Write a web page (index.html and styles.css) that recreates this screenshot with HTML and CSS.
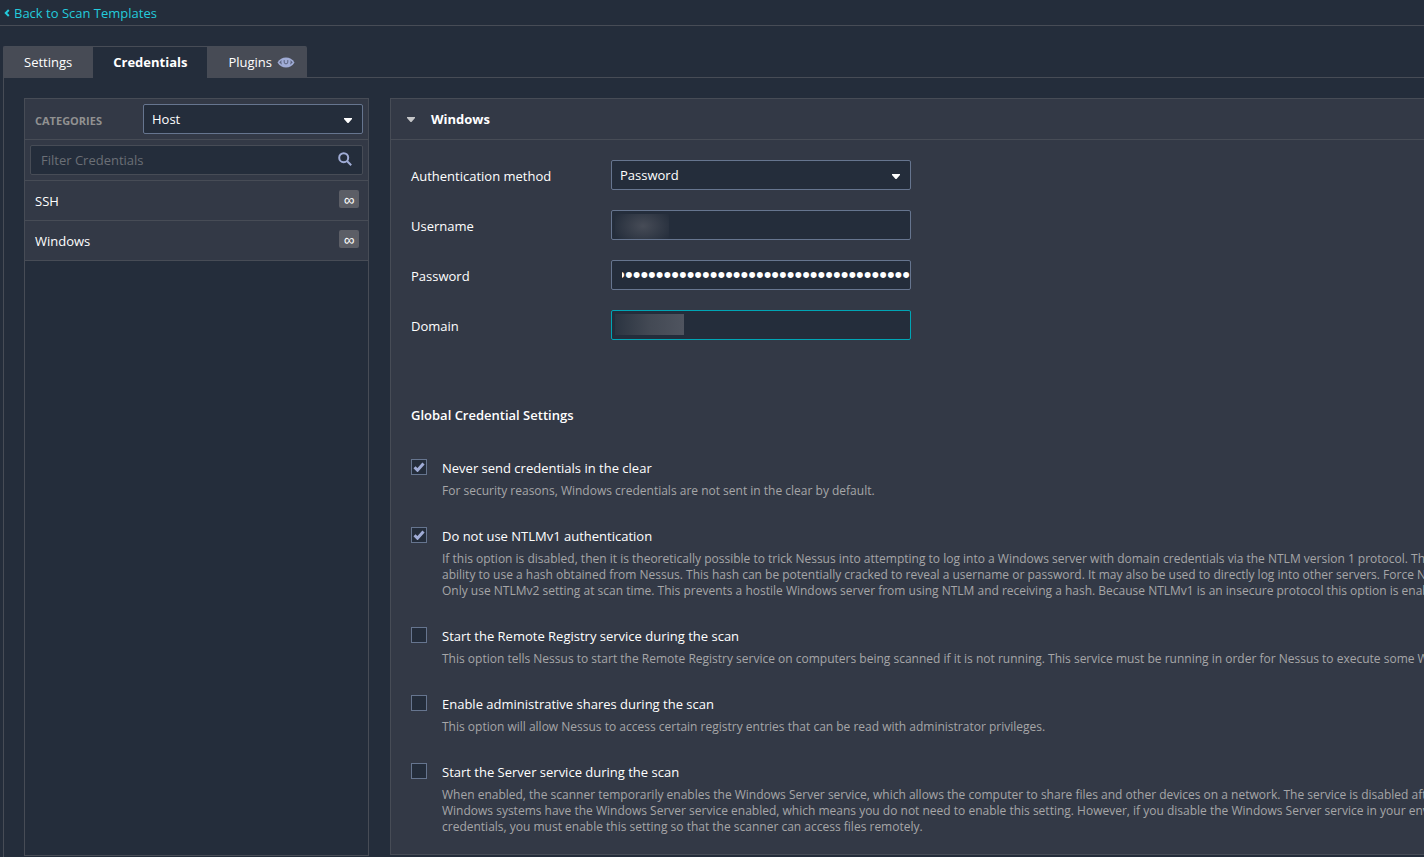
FILE: index.html
```html
<!DOCTYPE html>
<html lang="en">
<head>
  <meta charset="UTF-8">
  <title>Scan Templates - Credentials</title>
  <link rel="stylesheet" href="styles.css">
</head>
<body>
  <nav class="topbar">
    <a href="#">
      <svg width="6" height="8" viewBox="0 0 6 8"><path d="M4.800 1 1.800 4l3 3" fill="none" stroke="currentColor" stroke-width="2"/></svg>
      Back to Scan Templates
    </a>
  </nav>

  <div class="tabs">
    <button class="tab">Settings</button>
    <button class="tab active">Credentials</button>
    <button class="tab">Plugins
      <svg width="18" height="12" viewBox="0 0 18 12">
        <path d="M.5 6.500C2.500 3.200 5.500 1.500 9 1.500s6.500 1.700 8.500 5c-2 3.300-5 5-8.500 5s-6.500-1.700-8.500-5Z" fill="#a0acd6"/>
        <path d="M4.600 4.100 2.300 6.500l2.700 2.200C4.200 7 4.200 5.500 4.600 4.100ZM13.400 4.100l2.300 2.400L13 8.700c.8-1.700.8-3.200.4-4.600Z" fill="#59617c"/>
        <path d="M7.200 4.100v2a1.800 1.800 0 0 0 3.600 0v-2" fill="none" stroke="#59617c" stroke-width="1"/>
      </svg>
    </button>
  </div>

  <main class="content">
    <aside class="sidebar">
      <div class="side-head">
        <label for="category">CATEGORIES</label>
        <div class="select">
          <select id="category"><option>Host</option></select>
          <svg width="8" height="5" viewBox="0 0 8 5"><path d="M0 0h8v1L4.500 5h-1L0 1Z"/></svg>
        </div>
      </div>
      <div class="side-search">
        <input type="text" placeholder="Filter Credentials" aria-label="Filter Credentials">
        <svg width="14" height="14" viewBox="0 0 14 14"><circle cx="5.700" cy="5.700" r="4.500"/><path d="m9 9 4.200 4.200"/></svg>
      </div>
      <a class="side-item" href="#">SSH <span class="badge">∞</span></a>
      <a class="side-item" href="#">Windows <span class="badge">∞</span></a>
    </aside>

    <section class="panel">
      <h2 class="panel-head">
        <svg width="8" height="5" viewBox="0 0 8 5"><path d="M0 0h8v1L4.500 5h-1L0 1Z"/></svg>
        Windows
      </h2>
      <form class="panel-body">
        <div class="field">
          <label for="method">Authentication method</label>
          <div class="select">
            <select id="method"><option>Password</option></select>
            <svg width="8" height="5" viewBox="0 0 8 5"><path d="M0 0h8v1L4.500 5h-1L0 1Z"/></svg>
          </div>
        </div>
        <div class="field">
          <label for="username">Username</label>
          <input class="masked-user" type="text" id="username">
        </div>
        <div class="field">
          <label for="password">Password</label>
          <input class="secret" type="password" id="password" value="0000000000000000000000000000000000000000">
        </div>
        <div class="field">
          <label for="domain">Domain</label>
          <input class="masked-domain" type="text" id="domain">
        </div>

        <h3>Global Credential Settings</h3>

        <div class="option">
          <span class="check">
            <input type="checkbox" id="clear" checked>
            <svg width="12" height="10" viewBox="0 0 12 10"><path d="m1.500 5.200 3 3L10.500 1.500"/></svg>
          </span>
          <label for="clear">Never send credentials in the clear</label>
          <p>For security reasons, Windows credentials are not sent in the clear by default.</p>
        </div>
        <div class="option">
          <span class="check">
            <input type="checkbox" id="ntlm" checked>
            <svg width="12" height="10" viewBox="0 0 12 10"><path d="m1.500 5.200 3 3L10.500 1.500"/></svg>
          </span>
          <label for="ntlm">Do not use NTLMv1 authentication</label>
          <p>If this option is disabled, then it is theoretically possible to trick Nessus into attempting to log into a Windows server with domain credentials via the NTLM version 1 protocol. This<br>
          ability to use a hash obtained from Nessus. This hash can be potentially cracked to reveal a username or password. It may also be used to directly log into other servers. Force Nessus<br>
          Only use NTLMv2 setting at scan time. This prevents a hostile Windows server from using NTLM and receiving a hash. Because NTLMv1 is an insecure protocol this option is enabled</p>
        </div>
        <div class="option">
          <span class="check"><input type="checkbox" id="registry"></span>
          <label for="registry">Start the Remote Registry service during the scan</label>
          <p>This option tells Nessus to start the Remote Registry service on computers being scanned if it is not running. This service must be running in order for Nessus to execute some Windows</p>
        </div>
        <div class="option">
          <span class="check"><input type="checkbox" id="shares"></span>
          <label for="shares">Enable administrative shares during the scan</label>
          <p>This option will allow Nessus to access certain registry entries that can be read with administrator privileges.</p>
        </div>
        <div class="option">
          <span class="check"><input type="checkbox" id="server"></span>
          <label for="server">Start the Server service during the scan</label>
          <p>When enabled, the scanner temporarily enables the Windows Server service, which allows the computer to share files and other devices on a network. The service is disabled after<br>
          Windows systems have the Windows Server service enabled, which means you do not need to enable this setting. However, if you disable the Windows Server service in your environment<br>
          credentials, you must enable this setting so that the scanner can access files remotely.</p>
        </div>
      </form>
    </section>
  </main>
</body>
</html>
```
FILE: styles.css
```css
* { box-sizing: border-box; }
body {
  margin: 0;
  min-height: 100vh;
  display: flex;
  flex-direction: column;
  overflow-x: hidden;
  background: #242d3b;
  color: #fff;
  font: 13px/20px "Open Sans", sans-serif;
}
a { color: inherit; text-decoration: none; }
h2, h3, p { margin: 0; font-size: 13px; }
input, select, button { font: inherit; color: inherit; margin: 0; }

.topbar { height: 26px; padding: 3px 4px; border-bottom: 1px solid #474c56; color: #23cbdc; }
.topbar a { display: flex; align-items: center; gap: 4px; }

.tabs { display: flex; margin: 20px 0 -1px 3px; position: relative; }
.tab {
  display: flex;
  align-items: center;
  gap: 5px;
  height: 32px;
  padding: 0 20px 2px;
  border: 1px solid #474c56;
  border-width: 1px 0 0 1px;
  background: #474b55;
}
.tab:last-child { padding-right: 12px; border-radius: 0 2px 0 0; }
.tab:first-child { padding-right: 21px; border-radius: 2px 0 0 0; }
.tab.active { background: #242d3b; border-left: 0; font-weight: bold; }

.content {
  flex: 1;
  display: flex;
  gap: 21px;
  margin-left: 3px;
  padding: 20px 0 1px 20px;
  border: 1px solid #474c56;
  border-width: 1px 0 0 1px;
}

input[type="text"], input[type="password"], select {
  display: block;
  width: 100%;
  height: 30px;
  padding: 0 10px;
  border: 1px solid #66758f;
  border-radius: 2px;
  background: #242d3b;
  appearance: none;
  outline: none;
}
select { padding: 0 8px; }
.select { position: relative; }
.select svg { position: absolute; right: 11px; top: 14px; fill: #fff; pointer-events: none; }

.sidebar { flex: 0 0 345px; border: 1px solid #474c56; }
.side-head, .side-search, .side-item {
  display: flex;
  align-items: center;
  justify-content: space-between;
  background: #333946;
  border-bottom: 1px solid #474c56;
}
.side-head { height: 41px; padding: 0 5px 0 10px; }
.side-head label { padding-top: 4px; color: #919191; font-size: 11px; font-weight: bold; }
.side-head .select { width: 220px; }
.side-search { height: 41px; padding: 0 5px; position: relative; }
.side-search input[type="text"] { border-color: #474c56; }
.side-search input::placeholder { color: #6b6f76; opacity: 1; }
.side-search svg { position: absolute; right: 16px; top: 12px; fill: none; stroke: #a0acd6; stroke-width: 2; }
.side-item { height: 40px; padding: 0 9px 0 10px; }
.badge {
  width: 20px;
  height: 18px;
  margin-bottom: 4px;
  border-radius: 2px;
  background: #5c5e66;
  font-family: "Liberation Sans", sans-serif;
  font-size: 15px;
  text-align: center;
}

.panel { flex: 1 0 auto; align-self: flex-start; background: #333946; border: 1px solid #474c56; }
.panel-head {
  display: flex;
  align-items: center;
  gap: 16px;
  height: 41px;
  padding: 0 16px;
  border-bottom: 1px solid #474c56;
}
.panel-head svg { fill: #c5c6c8; }
.panel-body { padding: 20px 20px 19px; }

.field { display: grid; grid-template-columns: 200px 300px; margin-bottom: 20px; }
.field label { padding-top: 6px; }
input.masked-user {
  background: radial-gradient(32px 22px at 28px 12px, #474c57, #242d3b) 3px 3px / 54px 25px no-repeat #242d3b;
}
/* long value sits at its end, so the start is cut off */
input.secret {
  padding-right: 0;
  direction: rtl;
  font-family: "Liberation Sans", sans-serif;
  font-size: 22px;
}
input.masked-domain {
  border-color: #00a5b5;
  background: linear-gradient(90deg, #2b3441, #434954 50%, #4f545f) 3px 3px / 69px 21px no-repeat #242d3b;
}
.panel-body h3 { margin: 65px 0 33px; font-weight: 600; }

.option { display: grid; grid-template-columns: 31px auto; row-gap: 5px; margin-bottom: 27px; }
.option:last-child { margin-bottom: 0; }
.option p { grid-column: 2; color: #a6a6a8; font-size: 12px; line-height: 16px; white-space: nowrap; }
.check { position: relative; padding-top: 1px; }
.check input {
  display: block;
  width: 16px;
  height: 16px;
  border: 1px solid #66758f;
  background: #242d3b;
  appearance: none;
}
.check svg { position: absolute; left: 2px; top: 4px; fill: none; stroke: #a0acd6; stroke-width: 3; pointer-events: none; }
```
